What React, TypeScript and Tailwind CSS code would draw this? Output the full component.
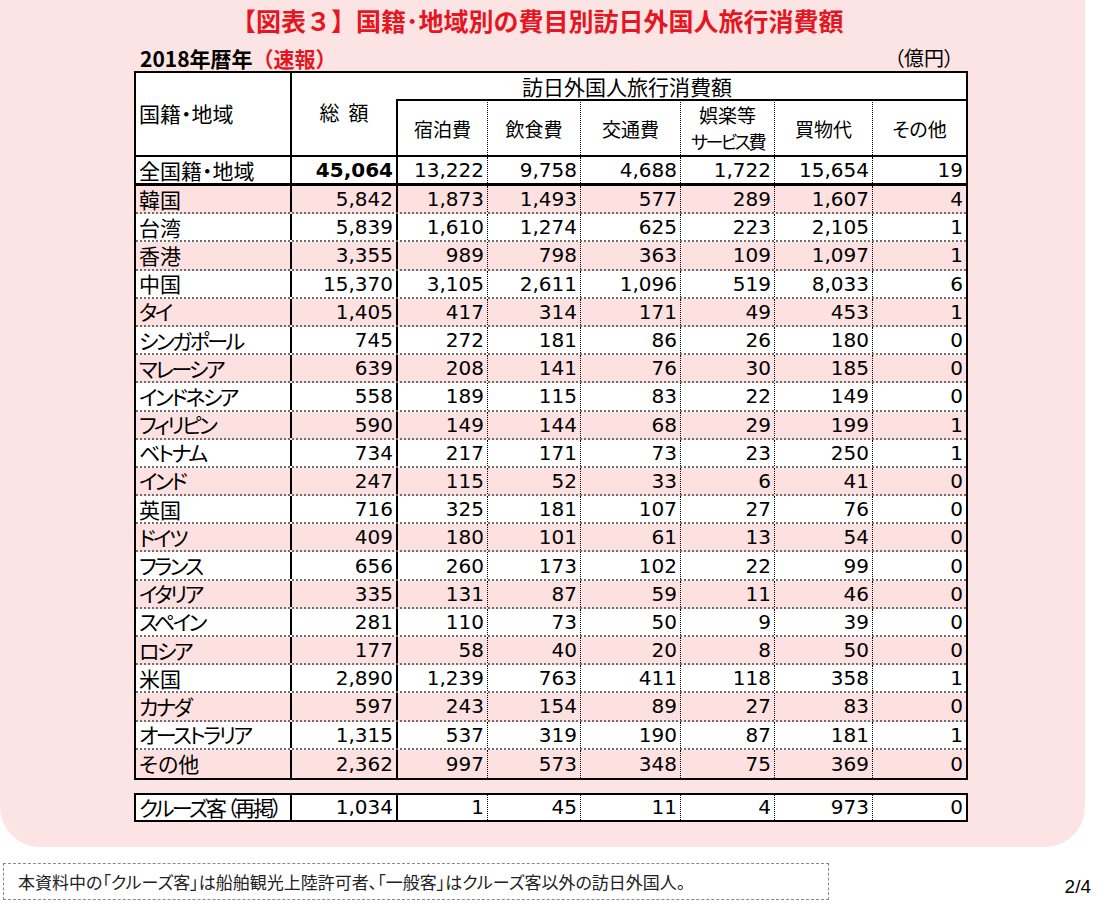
import React from "react";

type Row = { name: string; v: string[] };

const rows: Row[] = [
  { name: "韓国", v: ["5,842", "1,873", "1,493", "577", "289", "1,607", "4"] },
  { name: "台湾", v: ["5,839", "1,610", "1,274", "625", "223", "2,105", "1"] },
  { name: "香港", v: ["3,355", "989", "798", "363", "109", "1,097", "1"] },
  { name: "中国", v: ["15,370", "3,105", "2,611", "1,096", "519", "8,033", "6"] },
  { name: "タイ", v: ["1,405", "417", "314", "171", "49", "453", "1"] },
  { name: "シンガポール", v: ["745", "272", "181", "86", "26", "180", "0"] },
  { name: "マレーシア", v: ["639", "208", "141", "76", "30", "185", "0"] },
  { name: "インドネシア", v: ["558", "189", "115", "83", "22", "149", "0"] },
  { name: "フィリピン", v: ["590", "149", "144", "68", "29", "199", "1"] },
  { name: "ベトナム", v: ["734", "217", "171", "73", "23", "250", "1"] },
  { name: "インド", v: ["247", "115", "52", "33", "6", "41", "0"] },
  { name: "英国", v: ["716", "325", "181", "107", "27", "76", "0"] },
  { name: "ドイツ", v: ["409", "180", "101", "61", "13", "54", "0"] },
  { name: "フランス", v: ["656", "260", "173", "102", "22", "99", "0"] },
  { name: "イタリア", v: ["335", "131", "87", "59", "11", "46", "0"] },
  { name: "スペイン", v: ["281", "110", "73", "50", "9", "39", "0"] },
  { name: "ロシア", v: ["177", "58", "40", "20", "8", "50", "0"] },
  { name: "米国", v: ["2,890", "1,239", "763", "411", "118", "358", "1"] },
  { name: "カナダ", v: ["597", "243", "154", "89", "27", "83", "0"] },
  { name: "オーストラリア", v: ["1,315", "537", "319", "190", "87", "181", "1"] },
  { name: "その他", v: ["2,362", "997", "573", "348", "75", "369", "0"] },
];

const GRID = "grid grid-cols-[156px_106px_90px_93px_100px_94px_98px_93px]";
const JP = "font-['Noto_Sans_CJK_JP',sans-serif] [font-feature-settings:'palt']";
const NUM = "font-['DejaVu_Sans','Noto_Sans_CJK_JP',sans-serif] text-[20px] leading-none";

function Cells({ name, v, boldTotal }: { name: string; v: string[]; boldTotal?: boolean }) {
  const kana = /[\u30A1-\u30FA]/.test(name);
  return (
    <>
      <div
        className={`${JP} text-[21px] leading-none flex items-center pl-[3px] border-r-2 border-black whitespace-nowrap ${
          kana ? "tracking-[-2.5px]" : ""
        }`}
      >
        {name}
      </div>
      <div
        className={`${NUM} flex items-center justify-end pr-[3px] border-r-2 border-black ${boldTotal ? "font-bold" : ""}`}
      >
        {v[0]}
      </div>
      {v.slice(1).map((x, i) => (
        <div
          key={i}
          className={`${NUM} flex items-center justify-end pr-[3px] ${i < 5 ? "border-r border-dotted border-black" : ""}`}
        >
          {x}
        </div>
      ))}
    </>
  );
}

export default function App() {
  return (
    <div className="w-[1107px] h-[915px] bg-white text-black overflow-hidden">
      <div className="w-[1085px] h-[847px] bg-[#fde4e4] rounded-b-[40px] flex flex-col">
        <div className="h-[40px] flex items-center pl-[231px]">
          <span className="font-['Noto_Sans_CJK_JP',sans-serif] font-bold text-[25px] leading-none text-[#e5161f] whitespace-nowrap">
            【図表３】国籍･地域別の費目別訪日外国人旅行消費額
          </span>
        </div>
        <div className="h-[31px] ml-[134px] w-[834px] flex items-end justify-between pb-[1px]">
          <span className="font-['Noto_Sans_CJK_JP',sans-serif] font-bold text-[21px] leading-[24px] pl-[6px]">
            2018年暦年<span className="text-[#e5161f]">（速報）</span>
          </span>
          <span className={`${JP} text-[20px] leading-[24px] pr-[14px]`}>（億円）</span>
        </div>

        <div className="ml-[134px] w-[834px] border-2 border-black bg-white">
          <div className={`${GRID} grid-rows-[26px_56px] border-b-2 border-black`}>
            <div className={`${JP} row-span-2 text-[21px] leading-none flex items-center pl-[3px] pb-[2px] border-r-2 border-black`}>
              国籍・地域
            </div>
            <div className={`${JP} col-span-7 text-[21px] leading-none flex items-center justify-center pr-[4px]`}>
              訪日外国人旅行消費額
            </div>
            <div className={`${JP} text-[20px] leading-[28px] text-center border-r-2 border-black`}>
              総&nbsp;&nbsp;額
            </div>
            {["宿泊費", "飲食費", "交通費", "", "買物代", "その他"].map((h, i) => (
              <div
                key={i}
                className={`${JP} text-[19px] flex flex-col items-center justify-center border-t-2 border-black ${
                  i < 5 ? "border-r border-r-black [border-right-style:dotted]" : ""
                }`}
              >
                {i === 3 ? (
                  <>
                    <span className="leading-[27px]">娯楽等</span>
                    <span className="leading-[27px] text-[18px] tracking-[-2.5px]">サービス費</span>
                  </>
                ) : (
                  <span className="leading-none">{h}</span>
                )}
              </div>
            ))}
          </div>

          <div className={`${GRID} h-[29px] border-b-[3px] border-black bg-white`}>
            <Cells
              name="全国籍・地域"
              v={["45,064", "13,222", "9,758", "4,688", "1,722", "15,654", "19"]}
              boldTotal
            />
          </div>

          {rows.map((r, idx) => (
            <div
              key={r.name}
              className={`${GRID} h-[28.2px] ${idx % 2 === 0 ? "bg-[#fde1e1]" : "bg-white"} ${
                idx < rows.length - 1 ? "border-b-2 border-dotted border-[#6e6e6e]" : ""
              }`}
            >
              <Cells name={r.name} v={r.v} />
            </div>
          ))}
        </div>

        <div className="ml-[134px] mt-[13px] w-[834px] border-2 border-black bg-white">
          <div className={`${GRID} h-[25px]`}>
            <Cells name="クルーズ客 （再掲）" v={["1,034", "1", "45", "11", "4", "973", "0"]} />
          </div>
        </div>
      </div>

      <div className="flex items-start justify-between mt-[16px]">
        <div className="ml-[3px] w-[826px] h-[37px] border border-dashed border-[#8a8a8a] flex items-center pl-[14px]">
          <span className={`${JP} text-[17px] leading-none text-[#222]`}>
            本資料中の「クルーズ客」は船舶観光上陸許可者、「一般客」はクルーズ客以外の訪日外国人。
          </span>
        </div>
        <span className="font-['Liberation_Sans',sans-serif] text-[19px] leading-[20px] pt-[14px] pr-[16px]">2/4</span>
      </div>
    </div>
  );
}
